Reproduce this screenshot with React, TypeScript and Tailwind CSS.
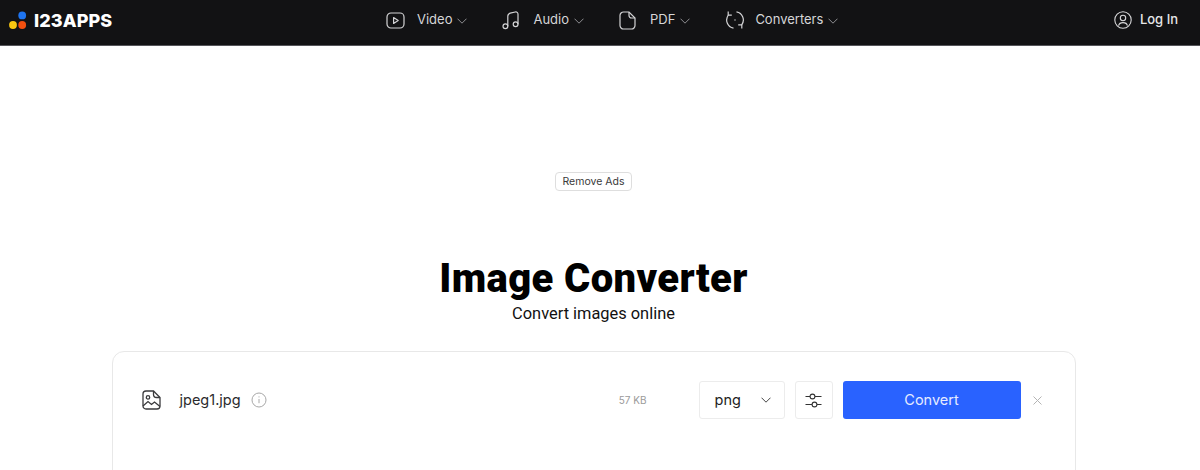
import React from "react";

const Chevron = ({ className = "" }: { className?: string }) => (
  <svg width="10" height="6" viewBox="0 0 10 6" fill="none" stroke="currentColor" strokeWidth="1" className={className}>
    <path d="M0.5 0.7 5 5.2 9.5 0.7" />
  </svg>
);

const VideoIcon = () => (
  <svg width="19" height="19" viewBox="0 0 19 19" fill="none" stroke="#d4d4d6" strokeWidth="1.2">
    <rect x="1" y="2" width="17" height="15" rx="4" />
    <path d="M7.6 6.6v5.8l4.6-2.9z" strokeLinejoin="round" />
  </svg>
);
const AudioIcon = () => (
  <svg width="18" height="19" viewBox="0 0 18 19" fill="none" stroke="#d4d4d6" strokeWidth="1.2">
    <circle cx="3.4" cy="15.2" r="2.4" />
    <circle cx="13.6" cy="13.2" r="2.4" />
    <path d="M5.8 15.2V5.2c0-1.6 1-2.6 2.4-3l5-1.2c1.6-.3 2.8.6 2.8 2.2v10" />
  </svg>
);
const PdfIcon = () => (
  <svg width="17" height="19" viewBox="0 0 17 19" fill="none" stroke="#d4d4d6" strokeWidth="1.2">
    <path d="M4.5 1H10l6 6v7.5a3.5 3.5 0 0 1-3.5 3.5h-8A3.5 3.5 0 0 1 1 14.5v-10A3.5 3.5 0 0 1 4.5 1z" />
    <path d="M10 1v3.5A2.5 2.5 0 0 0 12.5 7H16" />
  </svg>
);
const ConvertIcon = () => (
  <svg width="20" height="20" viewBox="0 0 20 20" fill="none" stroke="#d4d4d6" strokeWidth="1.2">
    <path d="M11.5 1.9A8.2 8.2 0 0 1 16.6 15" />
    <path d="M8.5 18.1A8.2 8.2 0 0 1 3.4 5" />
    <path d="M3.2 1.6v3.6h3.6" />
    <path d="M16.8 18.4v-3.6h-3.6" />
    <circle cx="10" cy="10" r="0.7" fill="#d4d4d6" stroke="none" />
  </svg>
);

const NavItem = ({ icon, label, gap, mr }: { icon: React.ReactNode; label: string; gap: string; mr: string }) => (
  <div className={`flex items-center ${mr}`}>
    <span className={`flex items-center ${gap}`}>
      {icon}
      <span className="text-[13px] text-[#d6d6d8]">{label}</span>
    </span>
    <Chevron className="ml-[5px] mt-[1px] text-[#8e8e92]" />
  </div>
);

export default function App() {
  return (
    <div className="w-[1200px] h-[470px] overflow-hidden bg-white font-['Inter',sans-serif]">
      <header className="h-[46px] pb-[5px] bg-[#121214] border-b border-[#55555a] flex items-center">
        <div className="flex items-center w-[386px] pl-[9px] shrink-0">
          <svg width="19" height="19" viewBox="0 0 19 19" className="mr-[6px]">
            <circle cx="13.2" cy="4.4" r="3.9" fill="#1e74f0" />
            <circle cx="4" cy="14" r="3.9" fill="#fbc711" />
            <circle cx="13.2" cy="14" r="3.9" fill="#f3500f" />
          </svg>
          <span className="text-[18px] font-extrabold text-white tracking-[0.1px]">I23APPS</span>
        </div>
        <nav className="flex items-center flex-1">
          <NavItem icon={<VideoIcon />} label="Video" gap="gap-[12px]" mr="mr-[35px]" />
          <NavItem icon={<AudioIcon />} label="Audio" gap="gap-[13px]" mr="mr-[35px]" />
          <NavItem icon={<PdfIcon />} label="PDF" gap="gap-[14px]" mr="mr-[35px]" />
          <NavItem icon={<ConvertIcon />} label="Converters" gap="gap-[10px]" mr="" />
        </nav>
        <div className="flex items-center gap-[8px] pr-[22px]">
          <svg width="18" height="18" viewBox="0 0 18 18" fill="none" stroke="#d8d8da" strokeWidth="1.1">
            <circle cx="9" cy="9" r="8.2" />
            <circle cx="9" cy="7" r="2.7" />
            <path d="M4.6 14.6c.4-2 2-3 4.4-3s4 1 4.4 3" />
          </svg>
          <span className="text-[13px] font-medium text-[#e6e6e8]">Log In</span>
        </div>
      </header>

      <main className="w-[1187px] flex flex-col items-center">
        <button className="mt-[126px] h-[19px] px-[6px] pt-[1px] rounded-[4px] border border-[#dedede] text-[10.5px] leading-none text-[#3a3a3a]">
          Remove Ads
        </button>
        <h1 className="mt-[64px] text-[40px] leading-[48px] font-black text-black font-['Roboto',sans-serif] tracking-[0.37px]">
          Image Converter
        </h1>
        <p className="-mt-[1px] text-[16.4px] leading-[24px] text-[#111] font-['Roboto',sans-serif]">Convert images online</p>
        <section className="mt-[25px] w-[964px] h-[200px] rounded-t-[12px] border border-[#e8e8e8] flex items-start pt-[29px] pl-[29px] pr-[33px]">
          <div className="flex items-center h-[38px] w-full">
            <svg width="19" height="20" viewBox="0 0 19 20" fill="none" stroke="#3a3a3c" strokeWidth="1.3">
              <path d="M4 1h7.5L18 7.5V16a3 3 0 0 1-3 3H4a3 3 0 0 1-3-3V4a3 3 0 0 1 3-3z" />
              <path d="M11.5 1v3.5a3 3 0 0 0 3 3H18" />
              <circle cx="6" cy="7.4" r="1.7" />
              <path d="M1 16l5-4.5 3.5 3 3-2.5 5.5 4.5" />
            </svg>
            <span className="ml-[19px] text-[14.5px] text-[#2b2b2d]">jpeg1.jpg</span>
            <svg width="16" height="16" viewBox="0 0 16 16" fill="none" stroke="#a8a8a8" className="ml-[10px]">
              <circle cx="8" cy="8" r="7" />
              <path d="M8 7v4.2M8 4.4v1" />
            </svg>
            <span className="ml-auto text-[10px] text-[#9a9a9a]">57 KB</span>
            <div className="ml-[52px] w-[86px] h-[38px] rounded-[3px] border border-[#ececec] flex items-center pl-[15px] pr-[13px] justify-between">
              <span className="text-[14.5px] text-[#222]">png</span>
              <Chevron className="text-[#444]" />
            </div>
            <div className="ml-[10px] w-[38px] h-[38px] rounded-[3px] border border-[#ececec] flex items-center justify-center">
              <svg width="17" height="15" viewBox="0 0 17 15" fill="none" stroke="#333" strokeWidth="1.1">
                <path d="M0.5 3.5H5M10 3.5h6.5M0.5 11.5H7M12 11.5h4.5" />
                <circle cx="7.5" cy="3.5" r="2.4" />
                <circle cx="9.5" cy="11.5" r="2.4" />
              </svg>
            </div>
            <button className="ml-[10px] w-[178px] h-[38px] rounded-[3px] bg-[#2962ff] text-[14.5px] text-[#e6ecff]">Convert</button>
            <svg width="9" height="9" viewBox="0 0 9 9" fill="none" stroke="#b4b4b4" className="ml-[12px]">
              <path d="M0.5 0.5l8 8M8.5 0.5l-8 8" />
            </svg>
          </div>
        </section>
      </main>
    </div>
  );
}
